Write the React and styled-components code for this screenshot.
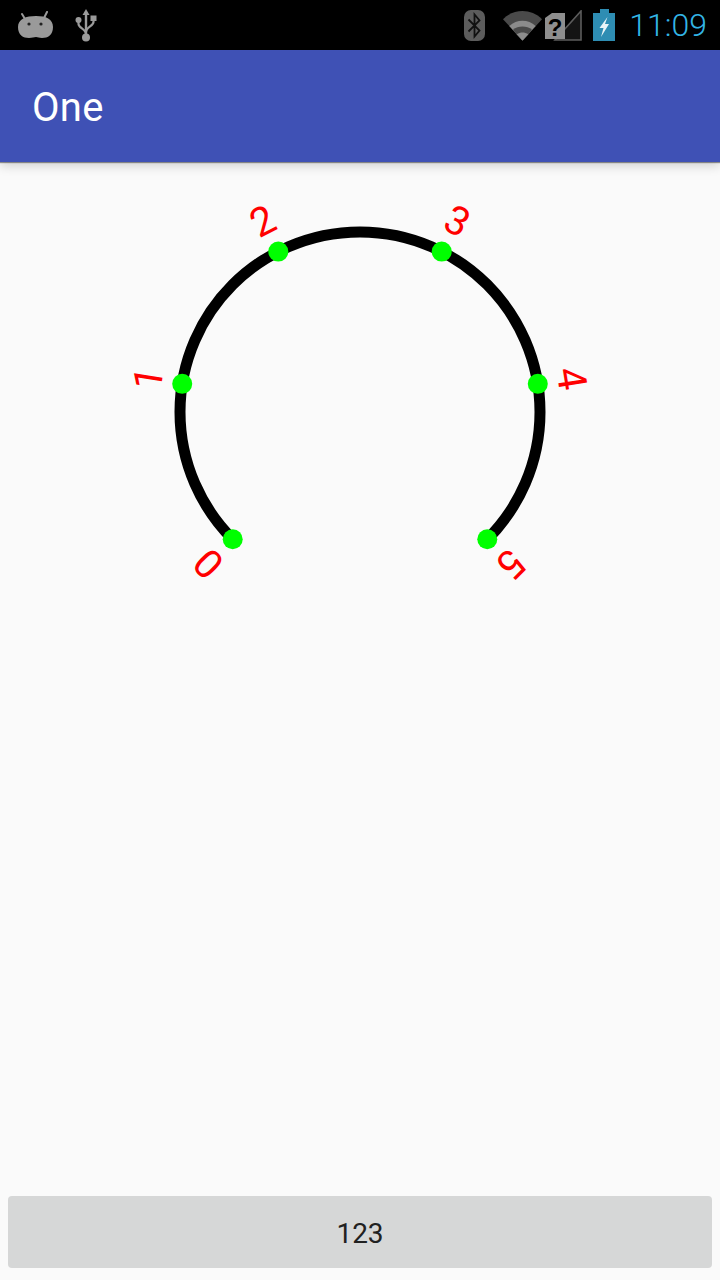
import React from "react";
import styled, { createGlobalStyle } from "styled-components";

const GlobalStyle = createGlobalStyle`
    html, body {
        margin: 0;
        padding: 0;
        background-color: #fafafa;
    }
`;

const Page = styled.div`
    width: 720px;
    height: 1280px;
    display: flex;
    flex-direction: column;
    background-color: #fafafa;
    font-family: Roboto, "Liberation Sans", sans-serif;
    overflow: hidden;
`;

const StatusBar = styled.div`
    height: 50px;
    flex: none;
    display: flex;
    align-items: center;
    justify-content: space-between;
    padding: 0 13px 0 18px;
    background-color: #000;
`;

const StatusGroup = styled.div`
    display: flex;
    align-items: center;
`;

const Clock = styled.span`
    margin-left: 14px;
    font-size: 32px;
    font-weight: 300;
    line-height: 50px;
    color: #33b5e5;
`;

const AppBar = styled.header`
    height: 112px;
    flex: none;
    display: flex;
    align-items: center;
    padding: 2px 0 0 32px;
    box-sizing: border-box;
    background-color: #3f51b5;
    box-shadow: 0 1px 1px rgba(0, 0, 0, 0.4), 0 4px 10px rgba(0, 0, 0, 0.16);
    position: relative;
    font-size: 40px;
    letter-spacing: 0.3px;
    color: #fff;
`;

const Content = styled.main`
    flex: 1;
    display: flex;
    flex-direction: column;
    justify-content: space-between;
    align-items: center;
    padding: 8px 8px 12px;
`;

const DialSvg = styled.svg`
    display: block;
    flex: none;
    margin: 10px -8px 0;
`;

const DialLabel = styled.text`
    font-family: Roboto, "Liberation Sans", sans-serif;
    font-size: 40px;
    fill: #ff0000;
    text-anchor: middle;
    dominant-baseline: central;
`;

const ActionButton = styled.button`
    width: 704px;
    height: 72px;
    flex: none;
    padding: 2px 0 0;
    border: none;
    border-radius: 4px;
    background-color: #d6d7d7;
    color: #212121;
    font-family: Roboto, sans-serif;
    font-size: 28px;
`;

const StatusIcon = styled.svg`
    display: block;
    flex: none;
    margin-left: ${(props) => props.$left || 0}px;
`;

const AndroidIcon = () => (
    <StatusIcon width="36" height="28" viewBox="0 0 36 28">
        <path d="M4 3 L7 8 M29 1 L26 7" stroke="#9a9a9a" strokeWidth="2" strokeLinecap="round" />
        <path d="M0 16 C0 8 8 5 18 5 C28 5 35 8 35 16 C35 24 30 27 24 27 C21 27 20 26 18 26 C16 26 14 27 11 27 C5 27 0 24 0 16 Z" fill="#9a9a9a" />
        <circle cx="11" cy="13" r="1.6" fill="#222" />
        <circle cx="23" cy="13" r="1.6" fill="#222" />
    </StatusIcon>
);

const UsbIcon = () => (
    <StatusIcon width="22" height="33" viewBox="0 0 22 33" $left={21}>
        <path d="M11 0 L14.5 6 L7.5 6 Z" fill="#9a9a9a" />
        <path d="M11 5 V29" stroke="#9a9a9a" strokeWidth="2.4" />
        <path d="M3.5 12 V15 C3.5 19 11 20 11 25 M18.5 10 V13 C18.5 17 11 18 11 23" stroke="#9a9a9a" strokeWidth="2.2" fill="none" />
        <circle cx="3.5" cy="11" r="3" fill="#9a9a9a" />
        <rect x="15.5" y="6.5" width="6" height="5.5" fill="#9a9a9a" />
        <circle cx="11" cy="28.5" r="4" fill="#9a9a9a" />
    </StatusIcon>
);

const BluetoothIcon = () => (
    <StatusIcon width="21" height="31" viewBox="0 0 21 31">
        <rect x="0" y="0" width="21" height="31" rx="7" fill="#5c5c5c" />
        <path d="M4.5 9.5 L15.5 20.5 L10.5 26.5 V4.5 L15.5 10.5 L4.5 21.5" stroke="#111" strokeWidth="1.8" fill="none" />
    </StatusIcon>
);

const WifiIcon = () => (
    <StatusIcon width="39" height="31" viewBox="0 0 40 31" $left={18}>
        <path d="M0 9 C11 -2 29 -2 40 9 L20 31 Z" fill="#4a4a4a" />
        <path d="M6.5 16 C14 9 26 9 33.5 16 L20 31 Z" fill="#8c8c8c" />
        <path d="M10 20 C16 15.5 24 15.5 30 20 L20 31 Z" fill="#4a4a4a" />
        <path d="M14 24.5 C18 22 22 22 26 24.5 L20 31 Z" fill="#8c8c8c" />
    </StatusIcon>
);

const SimSignalIcon = () => (
    <StatusIcon width="37" height="31" viewBox="0 0 37 31" $left={3}>
        <path d="M36 1 V30 H10 Z" fill="#141414" stroke="#5c5c5c" strokeWidth="1.6" />
        <path d="M0 8 L7 3 H20 V29 H0 Z" fill="#8e8e8e" />
        <text x="10" y="26" fontFamily="Liberation Sans, sans-serif" fontSize="24" fontWeight="700" textAnchor="middle" fill="#000">?</text>
    </StatusIcon>
);

const BatteryIcon = () => (
    <StatusIcon width="22" height="32" viewBox="0 0 22 32" $left={11}>
        <path d="M7 0 H16 V4 H22 V32 H0 V4 H7 Z" fill="#2e8db3" />
        <path d="M14.5 8 L6.5 19 H10.5 L8 28 L16 15 H12 Z" fill="#e8f4f8" />
    </StatusIcon>
);

const CENTER_X = 360;
const CENTER_Y = 232;
const RADIUS = 180;
const LABEL_RADIUS = 214;
const ANGLES = [135, 189, 243, 297, 351, 45];

const polar = (r, angle) => {
    const rad = (angle * Math.PI) / 180;
    return { x: CENTER_X + r * Math.cos(rad), y: CENTER_Y + r * Math.sin(rad) };
};

const Dial = () => {
    const start = polar(RADIUS, 135);
    const end = polar(RADIUS, 45);

    return (
        <DialSvg width="720" height="440" viewBox="0 0 720 440">
            <path
                d={`M${start.x} ${start.y} A${RADIUS} ${RADIUS} 0 1 1 ${end.x} ${end.y}`}
                fill="none"
                stroke="#000"
                strokeWidth="11"
            />
            {ANGLES.map((angle, i) => {
                const dot = polar(RADIUS, angle);
                const label = polar(LABEL_RADIUS, angle);
                return (
                    <g key={i}>
                        <circle cx={dot.x} cy={dot.y} r="10" fill="#00ff00" />
                        <DialLabel x={label.x} y={label.y} transform={`rotate(${angle + 90} ${label.x} ${label.y})`}>
                            {i}
                        </DialLabel>
                    </g>
                );
            })}
        </DialSvg>
    );
};

const App = () => (
    <Page>
        <GlobalStyle />
        <StatusBar>
            <StatusGroup>
                <AndroidIcon />
                <UsbIcon />
            </StatusGroup>
            <StatusGroup>
                <BluetoothIcon />
                <WifiIcon />
                <SimSignalIcon />
                <BatteryIcon />
                <Clock>11:09</Clock>
            </StatusGroup>
        </StatusBar>
        <AppBar>One</AppBar>
        <Content>
            <Dial />
            <ActionButton>123</ActionButton>
        </Content>
    </Page>
);

export default App;
